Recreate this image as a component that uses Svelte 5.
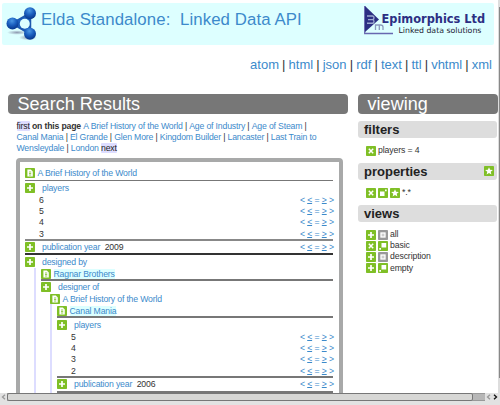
<script>
  const formats = ['atom', 'html', 'json', 'rdf', 'text', 'ttl', 'vhtml', 'xml'];
  const pageLines = [
    ['A Brief History of the World', 'Age of Industry', 'Age of Steam', ''],
    ['Canal Mania', 'El Grande', 'Glen More', 'Kingdom Builder', 'Lancaster', 'Last Train to'],
    ['Wensleydale', 'London']
  ];
  const views = [
    { name: 'all', icon: 'plus', state: 'grey' },
    { name: 'basic', icon: 'cross', state: 'shrink' },
    { name: 'description', icon: 'plus', state: 'grey' },
    { name: 'empty', icon: 'plus', state: 'shrink' }
  ];
</script>

{#snippet icon(kind)}
  <svg class="icon" viewBox="0 0 10 10">
    <rect width="10" height="10" rx="0.8" fill={kind === 'grey' ? '#999' : '#7fbf26'} />
    {#if kind === 'plus'}
      <path d="M5 2v6M2 5h6" stroke="#fff" stroke-width="1.7" />
    {:else if kind === 'cross'}
      <path d="M2.8 2.8l4.4 4.4M7.2 2.8L2.8 7.2" stroke="#fff" stroke-width="1.5" />
    {:else if kind === 'doc'}
      <path d="M2.4 1.6h3.4l2 1.8v5H2.4z" fill="#fff" />
      <path d="M4 4h2.2M4 5.5h2.2M4 7h2.2" stroke="#7fbf26" stroke-width=".8" />
    {:else if kind === 'star'}
      <path d="M5 1.2l1.1 2.6 2.8.2-2.2 1.8.7 2.7L5 7.1 2.6 8.5l.7-2.7L1.1 4l2.8-.2z" fill="#fff" />
    {:else if kind === 'grow'}
      <path d="M2 3.5h4.5V8H2zM7 1.5h1.7v1.7H7z" fill="#fff" />
    {:else if kind === 'shrink'}
      <path d="M3.5 2h4.7v4.5H3.5zM1.3 7h1.7v1.7H1.3z" fill="#fff" />
    {:else}
      <rect x="3" y="3" width="4" height="4" fill="#ccc" stroke="#fff" stroke-width="1.3" />
    {/if}
  </svg>
{/snippet}

{#snippet ops()}
  <span class="ops"><a>&lt;</a><a class="u">&lt;</a><a>=</a><a class="u">&gt;</a><a>&gt;</a></span>
{/snippet}

{#snippet values(list)}
  {#each list as v}
    <div class="row value"><span>{v}</span>{@render ops()}</div>
  {/each}
{/snippet}

<div class="window">
  <div class="page">
    <header>
      <svg class="logo" viewBox="0 0 32 35">
        <defs>
          <radialGradient id="ball" cx="45%" cy="28%" r="65%">
            <stop offset="0" stop-color="#4c98e4" />
            <stop offset=".55" stop-color="#1b60c0" />
            <stop offset="1" stop-color="#0a3d94" />
          </radialGradient>
          <radialGradient id="shade">
            <stop offset="0" stop-color="#668" stop-opacity=".65" />
            <stop offset="1" stop-color="#668" stop-opacity="0" />
          </radialGradient>
        </defs>
        <ellipse cx="11" cy="26.5" rx="10" ry="2.3" fill="url(#shade)" />
        <ellipse cx="22" cy="31.5" rx="9" ry="2.8" fill="url(#shade)" />
        <path d="M6.5 17.5L24 7.5v20z" fill="none" stroke="#1d58ae" stroke-width="2.5" />
        <path d="M11 14q6-1 8-4l5 2q-2 6 0 12l-5 1q-3-4-8-5" fill="#1d60bd" />
        <circle cx="18.8" cy="17.8" r="5" fill="#dff" />
        <circle cx="24" cy="7.2" r="6" fill="url(#ball)" />
        <circle cx="6.5" cy="17.5" r="6" fill="url(#ball)" />
        <circle cx="24" cy="27.7" r="6" fill="url(#ball)" />
      </svg>
      <h1>Elda Standalone:&nbsp; Linked Data API</h1>
      <div class="brand">
        <svg viewBox="0 0 30 30">
          <path d="M.7 1v27.5H29" fill="none" stroke="#6868b0" stroke-width="1.3" />
          <path d="M1 1l14 13.5L1 27z" fill="#2c2f83" />
          <path d="M3 11h5.500q1.500 0 1.500 1.800t-1.500 1.800H4h4.500q1.500 0 1.500 1.800t-1.500 1.800H3" fill="none" stroke="#9ba9cf" stroke-width="1.400" />
          <path d="M11.500 25v-5h5q2.500 0 2.500 2v3M15.300 20v5" fill="none" stroke="#8c9abd" stroke-width="1.300" />
        </svg>
        <div class="words"><b>Epimorphics Ltd</b><span>Linked data solutions</span></div>
      </div>
    </header>

    <nav class="formats">
      {#each formats as f, i}{#if i}<i>|</i>{/if}<a>{f}</a>{/each}
    </nav>

    <div class="columns">
      <main>
        <h2>Search Results</h2>
        <div class="pages">
          {#each pageLines as line, n}
            <div>
              {#if n === 0}<mark>first</mark>&nbsp;<b>on this page</b>&nbsp;{/if}{#each line as p, i}{#if i}<i>&nbsp;|&nbsp;</i>{/if}<a>{p}</a>{/each}{#if n === 2}&nbsp;<mark>next</mark>{/if}
            </div>
          {/each}
        </div>
        <section class="results">
          <div class="row top">{@render icon('doc')}<a class="near">A Brief History of the World</a></div>
          <hr />
          <div class="row prop">{@render icon('plus')}<a>players</a></div>
          {@render values([6, 5, 4, 3])}
          <hr class="mid" />
          <div class="row prop year">{@render icon('plus')}<a>publication year</a><span class="num">2009</span>{@render ops()}</div>
          <hr class="dark" />
          <div class="row prop">{@render icon('plus')}<a>designed by</a></div>
          <div class="nest">
            <div class="row">{@render icon('doc')}<a class="near hot">Ragnar Brothers</a></div>
            <hr />
            <div class="row prop">{@render icon('plus')}<a>designer of</a></div>
            <div class="inner">
              <div class="row pull">{@render icon('doc')}<a class="near">A Brief History of the World</a></div>
              <div class="row">{@render icon('doc')}<a class="near hot">Canal Mania</a></div>
              <hr />
              <div class="row prop">{@render icon('plus')}<a>players</a></div>
              {@render values([5, 4, 3, 2])}
              <hr />
              <div class="row prop year">{@render icon('plus')}<a>publication year</a><span class="num">2006</span>{@render ops()}</div>
              <hr />
            </div>
          </div>
        </section>
      </main>

      <aside>
        <h2>viewing</h2>
        <h3>filters</h3>
        <div class="body"><div class="item">{@render icon('cross')}<span>players = 4</span></div></div>
        <h3>properties {@render icon('star')}</h3>
        <div class="body"><div class="item">{@render icon('cross')}{@render icon('grow')}{@render icon('star')}<span>*.*</span></div></div>
        <h3>views</h3>
        <div class="body">
          {#each views as v}
            <div class="item">{@render icon(v.icon)}{@render icon(v.state)}<span>{v.name}</span></div>
          {/each}
        </div>
      </aside>
    </div>
  </div>
  <div class="vbar"><div></div></div>
  <footer>
    <span class="arrow dim"><svg viewBox="0 0 5 6"><path d="M4 .8L1.500 3 4 5.200" /></svg></span>
    <div class="track"><div class="thumb"></div></div>
    <span class="arrow dim"><svg viewBox="0 0 5 6"><path d="M4 .8L1.500 3 4 5.200" /></svg></span>
    <span class="arrow"><svg viewBox="0 0 5 6"><path d="M1 .8L3.500 3 1 5.200" /></svg></span>
  </footer>
</div>

<style>
  :global(body) { margin: 0; background: #fff; }
  * { box-sizing: border-box; }
  .window {
    width: 500px; height: 405px; overflow: hidden;
    display: grid; grid-template: 393px 12px / 498px 2px;
    font-family: "Liberation Sans", Arial, sans-serif; font-size: 8.7px; color: #333;
  }
  .page { overflow: hidden; padding-top: 3px; }
  a { color: #3c8acb; }
  i { font-style: normal; }
  header {
    margin: 0 4px 0 2px; height: 42px; border-radius: 2px; background: #dff;
    display: flex; align-items: flex-start; padding: 3px 0 0 4px;
  }
  .logo { width: 32px; height: 35px; flex: none; }
  h1 {
    margin: 4px 0 0 3px; font-size: 16.8px; line-height: 20px; font-weight: 400;
    color: #3c8acb; white-space: nowrap; letter-spacing: .1px;
  }
  .brand { margin-left: auto; margin-right: 7px; width: 123px; display: flex; margin-top: -1px; }
  .brand svg { width: 30px; height: 30px; flex: none; }
  .words { margin-left: -12.500px; padding-top: 8px; white-space: nowrap; font-family: "DejaVu Sans", sans-serif; }
  .words b { display: block; font-size: 11.4px; line-height: 13px; color: #2c2f83; }
  .words span { display: block; padding-left: 17px; font-size: 7.8px; line-height: 9px; color: #223; }
  .formats {
    display: flex; justify-content: flex-end; gap: 3.100px; height: 18px; margin: 11px 6px 0 0;
    font-size: 13px; line-height: 18px;
  }
  .columns { display: flex; gap: 10px; margin: 20px 0 0 8px; }
  main { width: 340px; letter-spacing: -.17px; }
  aside { width: 140px; letter-spacing: -.12px; }
  h2 {
    margin: 0; height: 20px; padding-left: 9.500px; border-radius: 4px; background: #777;
    color: #fff; font-size: 18px; line-height: 20px; font-weight: 400; letter-spacing: .04px;
  }
  .pages { padding: 6.500px 0 0 8.500px; white-space: nowrap; }
  .pages div { height: 11.2px; line-height: 11.2px; }
  mark { background: #ddf; color: #222; border-radius: 1px; }
  .results {
    margin: 3.900px 5px 0 8px; height: 260px; padding: 5px 6px 0 5px;
    border: 4px solid #a8a9a9; border-radius: 4px 4px 0 0;
  }
  .row { display: flex; align-items: center; height: 11.200px; white-space: nowrap; }
  .row.top { height: 13px; }
  .row.prop { height: 12.900px; }
  .row.year { height: 12.700px; }
  .prop > a { margin-left: 7px; }
  .near { margin-left: 2.500px; line-height: 10px; }
  .hot { background: #dff; }
  .num { margin-left: 4.500px; }
  .value { padding-left: 14px; }
  .ops { margin-left: auto; margin-right: -1px; display: flex; gap: 2.400px; }
  .u { text-decoration: underline; text-underline-offset: 0; }
  hr { margin: 0; border: 0; height: 1.500px; background: #777; }
  .mid { background: #888; }
  .dark { height: 2px; background: #333; }
  .icon { width: 10px; height: 10px; flex: none; display: block; }
  .nest, .inner { margin-left: 9px; border-left: 2px solid #ddf; }
  .nest { padding-left: 5px; }
  .inner { padding-left: 5px; }
  .inner .prop { height: 13.800px; }
  .inner .year { height: 13.500px; }
  .pull { margin-left: -7px; }
  h3 {
    margin: 7px 0 0; width: 139px; height: 17px; padding: 0 3px 0 6px; border-radius: 3px;
    background: #ddd; color: #222; font-size: 13px; line-height: 17px; letter-spacing: 0;
    display: flex; justify-content: space-between; align-items: center;
  }
  .body { padding: 7px 0 0 8px; }
  .item { display: flex; align-items: center; gap: 2px; height: 11.200px; }
  .item span { margin-top: -1px; }
  .body + h3 { margin-top: 6.800px; }
  .vbar { background: #ddd; padding: 7px 0 15px 1px; }
  .vbar div { height: 371px; background: #888; }
  footer {
    grid-column: 1 / 3; height: 12px; background: #e2e2e2; display: flex; align-items: flex-start;
  }
  .track { width: 478px; height: 8px; background: #b7b7b7; border: 1px solid #999; border-left: 0; border-right: 0; }
  .thumb { width: 466px; height: 8px; margin-top: -1px; border: 1px solid #777; border-radius: 2px; background: #d7d7d5; }
  .arrow { width: 7px; padding-left: 1px; }
  .arrow svg { display: block; width: 5px; height: 6px; margin-top: 1px; }
  .arrow path { fill: none; stroke: #111; stroke-width: 1.300; }
  .dim path { stroke: #999; }
</style>
